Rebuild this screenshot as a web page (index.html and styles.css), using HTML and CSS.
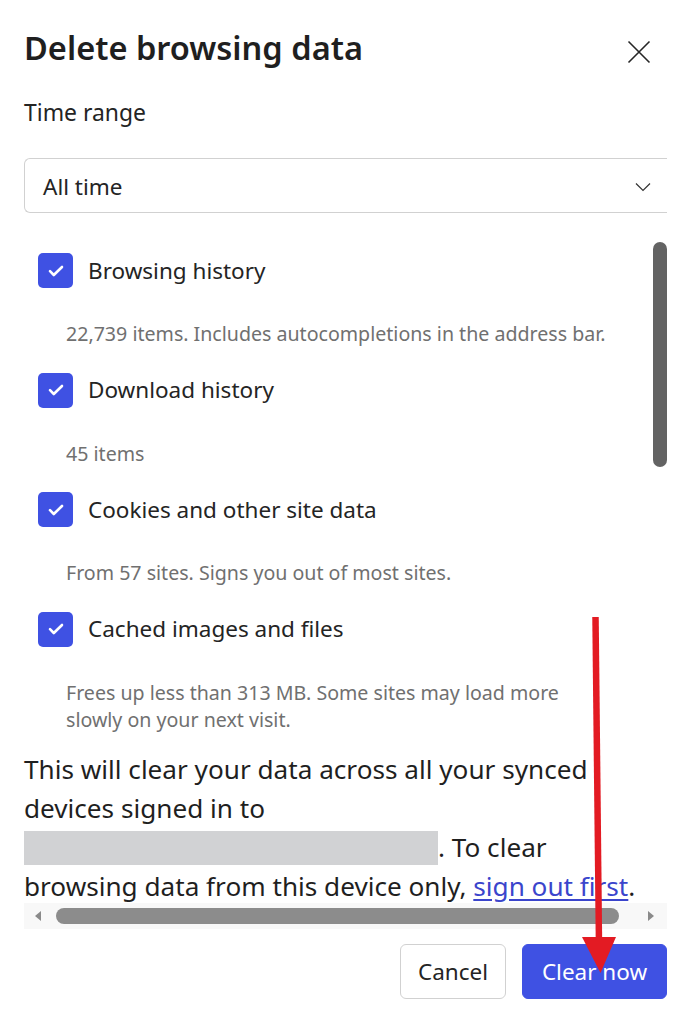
FILE: index.html
```html
<!DOCTYPE html>
<html lang="en">
<head>
<meta charset="utf-8">
<title>Delete browsing data</title>
<link rel="stylesheet" href="styles.css">
</head>
<body>
<div class="dialog">
  <header class="head">
    <h1 class="title">Delete browsing data</h1>
    <button class="close" aria-label="Close">
      <svg width="24" height="24" viewBox="0 0 24 24"><path d="M1.5 1.5 L22.5 22.5 M22.5 1.5 L1.5 22.5" stroke="#262626" stroke-width="1.6" fill="none"/></svg>
    </button>
  </header>

  <div class="field-label">Time range</div>
  <div class="select">
    <span class="select-value">All time</span>
    <svg class="chev" width="16" height="10" viewBox="0 0 16 10"><path d="M1 1.5 L8 8.5 L15 1.5" stroke="#333" stroke-width="1.2" fill="none"/></svg>
  </div>

  <div class="scroll-area">
    <ul class="items">
      <li class="item">
        <div class="row"><span class="cb"><svg width="34" height="34" viewBox="0 0 34 34"><path d="M11 17.2 L14.8 21 L23 13" stroke="#fff" stroke-width="2.6" fill="none" stroke-linecap="round" stroke-linejoin="round"/></svg></span><span class="label">Browsing history</span></div>
        <p class="desc">22,739 items. Includes autocompletions in the address bar.</p>
      </li>
      <li class="item">
        <div class="row"><span class="cb"><svg width="34" height="34" viewBox="0 0 34 34"><path d="M11 17.2 L14.8 21 L23 13" stroke="#fff" stroke-width="2.6" fill="none" stroke-linecap="round" stroke-linejoin="round"/></svg></span><span class="label">Download history</span></div>
        <p class="desc">45 items</p>
      </li>
      <li class="item">
        <div class="row"><span class="cb"><svg width="34" height="34" viewBox="0 0 34 34"><path d="M11 17.2 L14.8 21 L23 13" stroke="#fff" stroke-width="2.6" fill="none" stroke-linecap="round" stroke-linejoin="round"/></svg></span><span class="label">Cookies and other site data</span></div>
        <p class="desc">From 57 sites. Signs you out of most sites.</p>
      </li>
      <li class="item">
        <div class="row"><span class="cb"><svg width="34" height="34" viewBox="0 0 34 34"><path d="M11 17.2 L14.8 21 L23 13" stroke="#fff" stroke-width="2.6" fill="none" stroke-linecap="round" stroke-linejoin="round"/></svg></span><span class="label">Cached images and files</span></div>
        <p class="desc">Frees up less than 313 MB. Some sites may load more<br>slowly on your next visit.</p>
      </li>
    </ul>
    <div class="vbar"><div class="vthumb"></div></div>
  </div>

  <div class="sync">
    <p class="sync-text">This will clear your data across all your synced<br>devices signed in to<br><span class="redact"></span>. To clear<br>browsing data from this device only, <a class="link" href="#">sign out first</a>.</p>
    <div class="hbar">
      <span class="arrow-l"></span>
      <div class="hthumb"></div>
      <span class="arrow-r"></span>
    </div>
  </div>

  <div class="actions">
    <button class="btn">Cancel</button>
    <button class="btn primary">Clear now</button>
  </div>

  <svg class="annot" width="691" height="1023" viewBox="0 0 691 1023">
    <path d="M595.5 617 L599 945" stroke="#e31b23" stroke-width="6.5" fill="none"/>
    <polygon points="582,937 616,937 600.5,973" fill="#e31b23"/>
  </svg>
</div>
</body>
</html>
```

FILE: styles.css
```css
* { box-sizing: border-box; }

html, body {
  margin: 0;
  padding: 0;
  background: #ffffff;
}

body {
  font-family: "Noto Sans", "Open Sans", sans-serif;
  color: #242424;
}

.dialog {
  position: relative;
  width: 691px;
  height: 1023px;
  padding: 0 24px;
  overflow: hidden;
}

.head {
  display: flex;
  align-items: center;
  justify-content: space-between;
  padding-top: 28px;
}

.title {
  margin: 0;
  font-size: 32.6px;
  line-height: 40px;
  font-weight: 600;
  color: #1f1f1f;
}

.close {
  width: 40px;
  height: 40px;
  margin: 4px 8px -4px 0;
  padding: 0;
  border: none;
  background: transparent;
  display: flex;
  align-items: center;
  justify-content: center;
}

.field-label {
  margin: 30px 0 30px;
  font-size: 22.9px;
  line-height: 30px;
}

.select {
  height: 55px;
  display: flex;
  align-items: center;
  justify-content: space-between;
  padding: 2px 16px 0 18px;
  border: 1px solid #d1d1d1;
  border-right: none;
  border-radius: 6px 0 0 6px;
}

.select-value {
  font-size: 22.5px;
  line-height: 30px;
}

.chev { display: block; }

.scroll-area {
  display: flex;
  padding-top: 40px;
  padding-bottom: 9px;
}

.items {
  flex: 1;
  list-style: none;
  margin: 0;
  padding: 0 0 0 14px;
}

.item { margin-bottom: 25.5px; }
.item:last-child { margin-bottom: 0; }

.row {
  display: flex;
  align-items: center;
  gap: 15px;
  height: 35px;
}

.cb {
  width: 35px;
  height: 35px;
  border-radius: 5px;
  background: #3f51e3;
  display: flex;
  align-items: center;
  justify-content: center;
  flex-shrink: 0;
}

.cb svg { display: block; }

.label {
  font-size: 22.5px;
  line-height: 30px;
  color: #242424;
}

.desc {
  margin: 32px 0 0 28px;
  font-size: 19.6px;
  line-height: 27px;
  color: #707070;
}

.vbar {
  width: 14px;
  margin-top: -11px;
}

.vthumb {
  width: 14px;
  height: 225px;
  border-radius: 7px;
  background: #636363;
}

.sync { margin-top: 8px; }

.sync-text {
  margin: 0;
  font-size: 26.15px;
  line-height: 39px;
  color: #1f1f1f;
}

.redact {
  display: inline-block;
  width: 414px;
  height: 34px;
  background: #d1d2d4;
  vertical-align: -8px;
}

.link {
  color: #3b45cc;
  text-decoration: underline;
  text-underline-offset: 3px;
}

.hbar {
  height: 26px;
  margin-top: -3px;
  background: #f8f8f8;
  display: flex;
  align-items: center;
  padding: 0 12px 0 11px;
}

.arrow-l, .arrow-r {
  width: 0;
  height: 0;
  border-top: 5.5px solid transparent;
  border-bottom: 5.5px solid transparent;
}

.arrow-l { border-right: 6px solid #8a8a8a; }
.arrow-r { border-left: 6px solid #8a8a8a; }

.hthumb {
  height: 16px;
  width: 563px;
  margin: 0 29px 0 15px;
  border-radius: 8px;
  background: #8c8c8c;
}

.actions {
  display: flex;
  justify-content: flex-end;
  gap: 16px;
  margin-top: 15px;
}

.btn {
  height: 55px;
  padding: 0 17px;
  font-family: "Noto Sans", "Open Sans", sans-serif;
  font-size: 22.5px;
  color: #242424;
  background: #ffffff;
  border: 1px solid #d1d1d1;
  border-radius: 6px;
}

.btn:first-child { width: 106px; }

.btn.primary {
  width: 145px;
  background: #3f51e3;
  border-color: #3f51e3;
  color: #ffffff;
}

.annot {
  position: absolute;
  left: 0;
  top: 0;
  pointer-events: none;
}
```
